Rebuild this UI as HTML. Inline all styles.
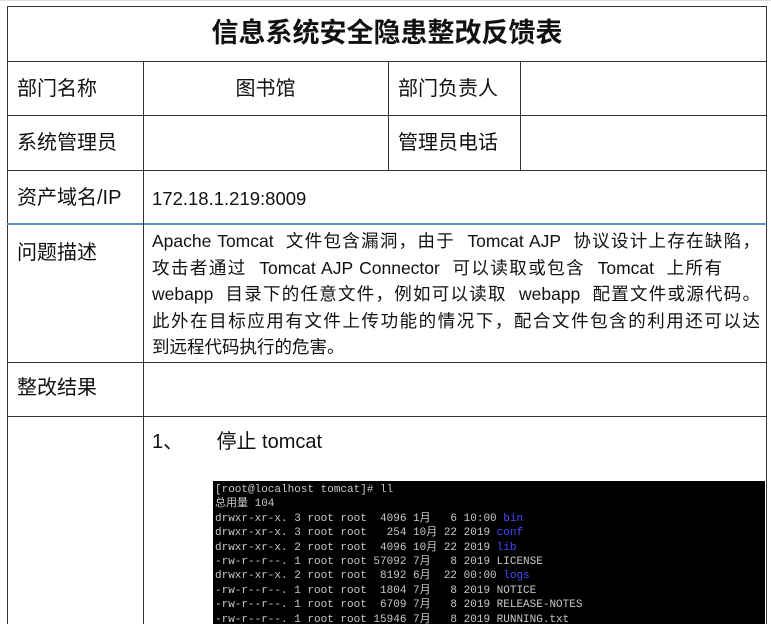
<!DOCTYPE html>
<html><head><meta charset="utf-8"><style>
body{margin:0;width:771px;height:624px;overflow:hidden;background:#fff;position:relative;font-family:"Liberation Sans","Noto Sans CJK SC",sans-serif;color:#111}
.l{position:absolute;background:#333}
.t{position:absolute;white-space:nowrap;font-size:20px;line-height:24px}
.d{position:absolute;left:152px;width:608px;font-size:17.5px;line-height:26.6px;white-space:nowrap}
.d div{text-align:justify;text-align-last:justify}
.d div.e{text-align-last:left}
.term{position:absolute;left:213px;top:481px;width:552px;height:143px;background:#000;font-family:"Liberation Mono","Noto Sans CJK SC",monospace;font-size:11px;line-height:14.4px;color:#c8c8c8;padding:2px 0 0 2px;box-sizing:border-box;white-space:pre}
.b{color:#4848ff}
</style></head><body>
<div class="l" style="left:0;top:0;width:771px;height:1px;background:#ddd"></div>
<div class="l" style="left:7px;top:6px;width:1px;height:618px"></div>
<div class="l" style="left:766px;top:6px;width:1px;height:618px"></div>
<div class="l" style="left:7px;top:6px;width:760px;height:1px"></div>
<div class="l" style="left:7px;top:61px;width:760px;height:1px"></div>
<div class="l" style="left:7px;top:115px;width:760px;height:1px"></div>
<div class="l" style="left:7px;top:170px;width:760px;height:1px"></div>
<div class="l" style="left:7px;top:223px;width:760px;height:2px;background:#5b8fd0"></div>
<div class="l" style="left:7px;top:362px;width:760px;height:1px"></div>
<div class="l" style="left:7px;top:416px;width:760px;height:1px"></div>
<div class="l" style="left:143px;top:61px;width:1px;height:563px"></div>
<div class="l" style="left:388px;top:61px;width:1px;height:109px"></div>
<div class="l" style="left:520px;top:61px;width:1px;height:109px"></div>
<div class="t" style="left:7px;width:760px;text-align:center;top:17px;font-size:27px;line-height:32px;font-weight:bold">信息系统安全隐患整改反馈表</div>
<div class="t" style="left:17px;top:77px">部门名称</div>
<div class="t" style="left:143px;width:245px;text-align:center;top:77px">图书馆</div>
<div class="t" style="left:398px;top:77px">部门负责人</div>
<div class="t" style="left:17px;top:131px">系统管理员</div>
<div class="t" style="left:398px;top:131px">管理员电话</div>
<div class="t" style="left:17px;top:186px">资产域名/IP</div>
<div class="t" style="left:152px;top:187px;font-size:18.5px">172.18.1.219:8009</div>
<div class="t" style="left:17px;top:241px">问题描述</div>
<div class="d" style="top:228px">
<div>Apache Tomcat&nbsp; 文件包含漏洞，由于&nbsp; Tomcat AJP&nbsp; 协议设计上存在缺陷，</div>
<div style="width:570px">攻击者通过&nbsp; Tomcat AJP Connector&nbsp; 可以读取或包含&nbsp; Tomcat&nbsp; 上所有</div>
<div>webapp&nbsp; 目录下的任意文件，例如可以读取&nbsp; webapp&nbsp; 配置文件或源代码。</div>
<div>此外在目标应用有文件上传功能的情况下，配合文件包含的利用还可以达</div>
<div class="e">到远程代码执行的危害。</div>
</div>
<div class="t" style="left:17px;top:376px">整改结果</div>
<div class="t" style="left:152px;top:430px">1、&nbsp;&nbsp;&nbsp;&nbsp;&nbsp; 停止 tomcat</div>
<div class="term">[root@localhost tomcat]# ll
总用量 104
drwxr-xr-x. 3 root root  4096 1月   6 10:00 <span class="b">bin</span>
drwxr-xr-x. 3 root root   254 10月 22 2019 <span class="b">conf</span>
drwxr-xr-x. 2 root root  4096 10月 22 2019 <span class="b">lib</span>
-rw-r--r--. 1 root root 57092 7月   8 2019 LICENSE
drwxr-xr-x. 2 root root  8192 6月  22 00:00 <span class="b">logs</span>
-rw-r--r--. 1 root root  1804 7月   8 2019 NOTICE
-rw-r--r--. 1 root root  6709 7月   8 2019 RELEASE-NOTES
-rw-r--r--. 1 root root 15946 7月   8 2019 RUNNING.txt</div>
</body></html>
